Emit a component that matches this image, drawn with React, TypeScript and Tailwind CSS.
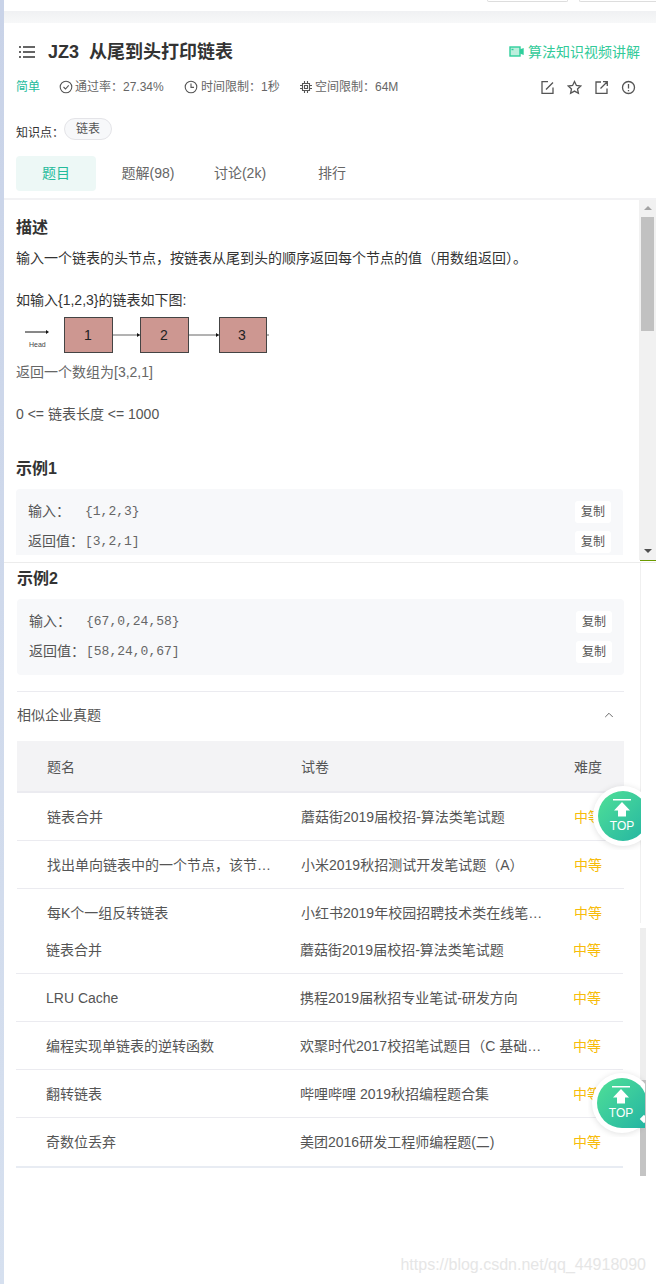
import { ChevronUp } from "lucide-react";

const cjk = "font-['Liberation_Sans','Noto_Sans_CJK_SC',sans-serif]";

const topRows = [
  ["链表合并", "蘑菇街2019届校招-算法类笔试题"],
  ["找出单向链表中的一个节点，该节…", "小米2019秋招测试开发笔试题（A）"],
];

const bottomRows = [
  ["LRU Cache", "携程2019届秋招专业笔试-研发方向"],
  ["编程实现单链表的逆转函数", "欢聚时代2017校招笔试题目（C 基础…"],
  ["翻转链表", "哔哩哔哩 2019秋招编程题合集"],
  ["奇数位丢弃", "美团2016研发工程师编程题(二)"],
];

function ListIcon() {
  return (
    <svg width="18" height="14" viewBox="0 0 18 14" fill="none" stroke="#333" strokeWidth="1.6">
      <path d="M5 2h12M5 7h12M5 12h12" />
      <path d="M1 2h2M1 7h2M1 12h2" />
    </svg>
  );
}

function VideoIcon() {
  return (
    <svg width="15" height="11" viewBox="0 0 15 11" fill="none" stroke="#2fcf9c" strokeWidth="1.4">
      <rect x="1" y="1" width="10" height="9" fill="#bdeedd" />
      <path d="M2.5 3.5h2" />
      <path d="M11.5 4l2.5-1v5l-2.5-1z" fill="#2fcf9c" />
    </svg>
  );
}

function MetaIcon({ d }: { d: string }) {
  return (
    <svg width="14" height="14" viewBox="0 0 14 14" fill="none" stroke="#555" strokeWidth="1.1" className="shrink-0">
      <path d={d} />
    </svg>
  );
}

const circle = "M7 1.2a5.8 5.8 0 1 0 0 11.6a5.8 5.8 0 1 0 0-11.6z";

function ActionIcon({ children }: { children: React.ReactNode }) {
  return (
    <svg width="15" height="15" viewBox="0 0 15 15" fill="none" stroke="#555" strokeWidth="1.3">
      {children}
    </svg>
  );
}

function CopyButton() {
  return (
    <span className="flex h-[22px] w-9 shrink-0 items-center justify-center rounded-[3px] bg-white text-xs text-[#555]">
      复制
    </span>
  );
}

function CodeRow({ label, value }: { label: string; value: string }) {
  return (
    <div className="flex h-[30px] items-center pr-3 pl-3 text-sm text-[#555]">
      <span className="w-[57px] pb-[2px]">{label}</span>
      <span className="flex-1 font-['Liberation_Mono',monospace] text-[13px] text-[#666]">{value}</span>
      <CopyButton />
    </div>
  );
}

function TopButton({ bubble }: { bubble?: boolean }) {
  return (
    <div className="h-[60px] w-[60px] rounded-full bg-white p-[5px] shadow-[0_1px_6px_rgba(0,0,0,0.12)]">
      <div
        className={
          "relative flex h-[50px] w-[50px] flex-col items-center rounded-full bg-gradient-to-br from-[#4fe096] to-[#22b4a2] pt-[8px] pr-[2px] text-white " +
          (bubble ? "rounded-br-none" : "")
        }
      >
        <svg width="18" height="19" viewBox="0 0 18 19" fill="white">
          <path d="M0 0h18v1.5H0z" />
          <path d="M9 3l8 8.5h-4v6H5v-6H1z" />
        </svg>
        <span className="mt-[2px] font-['Liberation_Sans',sans-serif] text-xs leading-3">TOP</span>
        {bubble ? <span className="absolute top-[38px] left-[44px] h-[6px] w-[6px] rotate-45 bg-white" /> : null}
      </div>
    </div>
  );
}

function Row({ name, paper, border = true }: { name: string; paper: string; border?: boolean }) {
  return (
    <div className={"flex h-12 items-center text-sm text-[#555] " + (border ? "border-b border-[#ebebf0]" : "")}>
      <span className="w-[284px] truncate pl-[30px]">{name}</span>
      <span className="flex-1 truncate">{paper}</span>
      <span className="w-[50px] text-[#f7bc0a]">中等</span>
    </div>
  );
}

export default function App() {
  return (
    <div className={`flex h-[1284px] w-[656px] overflow-hidden bg-white ${cjk}`}>
      <div className="w-1 shrink-0 bg-gradient-to-b from-[#c9d3e8] to-[#d6e0ef]" />
      <div className="relative flex min-w-0 flex-1 flex-col">
        {/* top strip */}
        <div className="flex h-[11px] shrink-0 items-start justify-end gap-[11px]">
          <span className="h-[2px] w-[81px] rounded-b border-x border-b border-[#ddd]" />
          <span className="h-[2px] w-[77px] rounded-bl border-b border-l border-[#ddd]" />
        </div>
        <div className="h-3 shrink-0 bg-gradient-to-b from-[#f0f1f3] to-[#f7f8f9]" />

        {/* question header */}
        <div className="h-[177px] shrink-0 border-b-2 border-[#f2f2f4] pl-3">
          <div className="flex h-[57px] items-center">
            <span className="ml-[2px] w-[30px]">
              <ListIcon />
            </span>
            <h1 className="text-lg font-bold text-[#333]">JZ3&nbsp;&nbsp;从尾到头打印链表</h1>
            <span className="mr-4 ml-auto flex items-center gap-1 text-sm text-[#32ca99]">
              <VideoIcon />
              算法知识视频讲解
            </span>
          </div>
          <div className="flex h-[14px] items-center text-xs text-[#666]">
            <span className="w-[43px] text-[#25bb9b]">简单</span>
            <span className="flex w-[125px] items-center gap-[2px]">
              <MetaIcon d={`${circle}M4.5 7l2 2 3.2-3.6`} />
              通过率：27.34%
            </span>
            <span className="flex w-[115px] items-center gap-[3px]">
              <MetaIcon d={`${circle}M7 3.5V7.4h3`} />
              时间限制：1秒
            </span>
            <span className="flex items-center gap-[2px]">
              <MetaIcon d="M3.5 3.5h7v7h-7zM5.5 1v2.5M8.5 1v2.5M5.5 10.5V13M8.5 10.5V13M1 5.5h2.5M1 8.5h2.5M10.5 5.5H13M10.5 8.5H13M5.5 5.5h3v3h-3z" />
              空间限制：64M
            </span>
            <span className="mr-5 ml-auto flex gap-3">
              <ActionIcon>
                <path d="M8 1.7H2v11.6h11V7.5M6 9.5l7-7" />
              </ActionIcon>
              <ActionIcon>
                <path d="M7.5 1.5l1.9 4 4.3.5-3.2 3 .9 4.300-3.900-2.200-3.900 2.200.9-4.300-3.200-3 4.300-.5z" />
              </ActionIcon>
              <ActionIcon>
                <path d="M7 2H2v11.300h11V8.500M6.500 8.500l6.500-6.500M9 1.700h4.300V6" />
              </ActionIcon>
              <ActionIcon>
                <circle cx="7.5" cy="7.5" r="6" />
                <path d="M7.5 4v4.500M7.5 10v1.300" />
              </ActionIcon>
            </span>
          </div>
          <div className="mt-6 flex h-[22px] items-center text-xs text-[#333]">
            <span className="mt-2 w-[48px]">知识点：</span>
            <span className="flex h-[22px] w-[48px] items-center justify-center rounded-full border border-[#e4e4e8] bg-[#f7f8fa] text-[#555]">
              链表
            </span>
          </div>
          <div className="mt-4 flex h-[35px] text-sm text-[#666]">
            <span className="mr-[6px] flex w-[80px] items-center justify-center rounded bg-[#edf8f6] pb-[2px] text-[#25bb9b]">题目</span>
            <span className="flex w-[92px] items-center justify-center pb-[2px]">题解(98)</span>
            <span className="flex w-[92px] items-center justify-center pb-[2px]">讨论(2k)</span>
            <span className="flex w-[92px] items-center justify-center pb-[2px]">排行</span>
          </div>
        </div>

        {/* scrolling description, cut by its frame */}
        <div className="flex h-[362px] shrink-0">
          <div className="h-[355px] min-w-0 flex-1 overflow-hidden pr-4 pl-3 text-sm text-[#333]">
            <h2 className="mt-[18px] text-base leading-5 font-bold">描述</h2>
            <p className="mt-[10px] leading-5">输入一个链表的头节点，按链表从尾到头的顺序返回每个节点的值（用数组返回）。</p>
            <p className="mt-[22px] leading-5">如输入{"{1,2,3}"}的链表如下图:</p>
            <svg width="256" height="38" viewBox="0 0 256 38" className="mt-[7px] block font-['Liberation_Sans',sans-serif]">
              <path d="M9 15h22" stroke="#111" />
              <path d="M33 15l-3-2v4z" fill="#111" />
              <text x="13" y="30" fontSize="7" fill="#444">Head</text>
              <g fill="#cd9791" stroke="#444" strokeWidth="1">
                <rect x="48.5" y="0.5" width="48" height="35" />
                <rect x="124.5" y="0.5" width="48" height="35" />
                <rect x="203.5" y="0.5" width="47" height="35" />
              </g>
              <path d="M97 18h27M173 18h30M251 18h2" stroke="#666" />
              <path d="M124 18l-3-2v4zM203 18l-3-2v4z" fill="#111" />
              <text x="72" y="23" fontSize="14" textAnchor="middle" fill="#222">1</text>
              <text x="148" y="23" fontSize="14" textAnchor="middle" fill="#222">2</text>
              <text x="226" y="23" fontSize="14" textAnchor="middle" fill="#222">3</text>
            </svg>
            <p className="mt-[7px] leading-5 text-[#666]">返回一个数组为[3,2,1]</p>
            <p className="mt-[22px] leading-5 text-[#555]">0 &lt;= 链表长度 &lt;= 1000</p>
            <h2 className="mt-[35px] text-base leading-5 font-bold">示例1</h2>
            <div className="mt-[10px] rounded bg-[#f7f8fa] py-2">
              <CodeRow label="输入：" value="{1,2,3}" />
              <CodeRow label="返回值：" value="[3,2,1]" />
            </div>
          </div>
          <div className="flex h-[360px] w-[17px] shrink-0 flex-col items-center bg-[#f1f1f1]">
            <span className="mt-[6px] h-0 w-0 border-x-4 border-b-4 border-x-transparent border-b-[#a3a3a3]" />
            <span className="mt-[7px] h-[114px] w-[13px] bg-[#c1c1c1]" />
            <span className="mt-auto mb-[7px] h-0 w-0 border-x-4 border-t-4 border-x-transparent border-t-[#505050]" />
          </div>
        </div>
        <div className="relative h-[1px] shrink-0 bg-[#ececec]">
          <span className="absolute top-[-2px] right-0 h-[1px] w-4 bg-[#6b9a00]" />
        </div>

        {/* second capture: remaining examples and the table */}
        <div className="mb-[3px] h-[360px] w-[637px] shrink-0 overflow-hidden border-r border-[#f0f0f0] pr-4 pl-[13px] text-sm text-[#333]">
          <h2 className="mt-[6px] text-base leading-5 font-bold">示例2</h2>
          <div className="mt-[10px] rounded bg-[#f7f8fa] py-2">
            <CodeRow label="输入：" value="{67,0,24,58}" />
            <CodeRow label="返回值：" value="[58,24,0,67]" />
          </div>
          <div className="mt-4 flex h-[50px] items-center justify-between border-t border-[#ebebf0] pb-1 text-[#555]">
            <span>相似企业真题</span>
            <ChevronUp className="mr-2 h-[14px] w-[14px]" strokeWidth={1.5} />
          </div>
          <div className="flex h-[52px] items-center border-b-2 border-[#ebebf0] bg-[#f3f3f5] pt-[2px] text-[#555]">
            <span className="w-[284px] pl-[30px]">题名</span>
            <span className="flex-1">试卷</span>
            <span className="w-[50px]">难度</span>
          </div>
          {topRows.map(([name, paper]) => (
            <Row key={name} name={name} paper={paper} />
          ))}
          <Row name="每K个一组反转链表" paper="小红书2019年校园招聘技术类在线笔…" border={false} />
        </div>

        {/* third capture */}
        <div className="flex flex-1">
          <div className="min-w-0 flex-1 pr-[17px] pl-3">
            <div className="border-b-2 border-[#e8ecf3]">
              <Row name="链表合并" paper="蘑菇街2019届校招-算法类笔试题" />
              {bottomRows.map(([name, paper], i) => (
                <Row key={name} name={name} paper={paper} border={i < bottomRows.length - 1} />
              ))}
            </div>
          </div>
          <div className="mt-[2px] flex h-[248px] w-[6px] shrink-0 flex-col bg-[#eeeeee]">
            <span className="mt-auto h-[96px] bg-[#c4c4c4]" />
          </div>
          <div className="w-[10px] shrink-0" />
        </div>

        <span className="absolute right-[10px] bottom-[7px] text-base text-[#e6e6e6]">https://blog.csdn.net/qq_44918090</span>

        {/* floating back-to-top buttons, cut by the right edge of their capture */}
        <div className="absolute top-[782px] left-[585px] h-[68px] w-[52px] overflow-hidden pt-1 pl-1">
          <TopButton />
        </div>
        <div className="absolute top-[1069px] left-[584px] h-[68px] w-[57px] overflow-hidden pt-1 pl-1">
          <TopButton bubble />
        </div>
      </div>
    </div>
  );
}
